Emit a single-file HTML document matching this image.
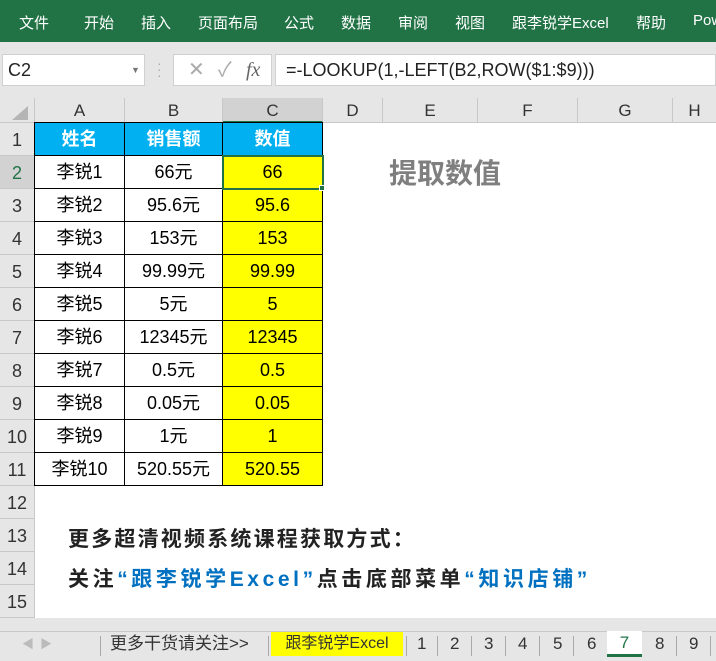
<!DOCTYPE html><html><head><meta charset="utf-8"><style>
*{margin:0;padding:0;box-sizing:border-box}
body{width:716px;height:661px;overflow:hidden;background:#fff;font-family:"Liberation Sans","Noto Sans CJK SC",sans-serif;position:relative}
.a{position:absolute;white-space:nowrap}
.rib{left:0;top:0;width:716px;height:42px;background:#217346;color:#fff;font-size:15px}
.rib span{position:absolute;top:12px}
.fb{left:0;top:42px;width:716px;height:56px;background:#e6e6e6}
.ch{top:98px;height:25px;background:#e6e6e6;border-right:1px solid #c8c8c8;border-bottom:1px solid #c8c8c8;text-align:center;font-size:17px;line-height:25px;color:#333}
.rh{left:0;width:35px;height:33px;background:#e6e6e6;border-bottom:1px solid #c8c8c8;border-right:1px solid #c8c8c8;text-align:center;font-size:18px;line-height:34px;color:#333}
.g{display:grid;grid-template-columns:90px 98px 100px;grid-auto-rows:33px;border-left:1px solid #000;border-top:1px solid #000}
.g div{border-right:1px solid #000;border-bottom:1px solid #000;text-align:center;font-size:18px;line-height:32px;color:#000;white-space:nowrap}
.g .h{background:#00b0f0;color:#fff;font-weight:bold}
.g .y{background:#ff0}
.sep{position:absolute;top:4px;height:20px;border-left:1px solid #aaa}
</style></head><body>
<div class="a rib">
<span style="left:19px">文件</span><span style="left:84px">开始</span><span style="left:141px">插入</span><span style="left:198px">页面布局</span><span style="left:284px">公式</span><span style="left:341px">数据</span><span style="left:398px">审阅</span><span style="left:455px">视图</span><span style="left:512px">跟李锐学Excel</span><span style="left:636px">帮助</span><span style="left:693px">Pow</span>
</div>
<div class="a fb"></div>
<div class="a" style="left:2px;top:54px;width:143px;height:32px;background:#fff;border:1px solid #d0d0d0;font-size:18px;line-height:30px;padding-left:5px;color:#222">C2<span class="a" style="left:128px;top:0;font-size:9px;color:#777">▼</span></div>
<div class="a" style="left:157px;top:60px;color:#aaa;font-size:14px;line-height:6px">·<br>·<br>·</div>
<div class="a" style="left:173px;top:54px;width:99px;height:32px;background:#fff;border:1px solid #d0d0d0;color:#aaa;font-size:20px;line-height:30px"><span class="a" style="left:14px">✕</span><span class="a" style="left:44px">✓</span><span class="a" style="left:72px;font-family:'Liberation Serif',serif;font-style:italic;color:#666">fx</span></div>
<div class="a" style="left:275px;top:54px;width:441px;height:32px;background:#fff;border:1px solid #d0d0d0;font-size:18px;line-height:30px;padding-left:10px;color:#222">=-LOOKUP(1,-LEFT(B2,ROW($1:$9)))</div>
<div class="a ch" style="left:0;width:35px;background:#e6e6e6"><div class="a" style="left:12px;top:8px;width:0;height:0;border-left:16px solid transparent;border-bottom:14px solid #b5b5b5"></div></div>
<div class="a ch" style="left:35px;width:90px">A</div>
<div class="a ch" style="left:125px;width:98px">B</div>
<div class="a ch" style="left:223px;width:100px;background:#d2d2d2;border-bottom:2px solid #217346">C</div>
<div class="a ch" style="left:323px;width:60px">D</div>
<div class="a ch" style="left:383px;width:95px">E</div>
<div class="a ch" style="left:478px;width:100px">F</div>
<div class="a ch" style="left:578px;width:95px">G</div>
<div class="a ch" style="left:673px;width:43px;border-right:none">H</div>
<div class="a rh" style="top:123px">1</div><div class="a rh" style="top:156px;background:#d2d2d2;color:#217346">2</div><div class="a rh" style="top:189px">3</div><div class="a rh" style="top:222px">4</div><div class="a rh" style="top:255px">5</div><div class="a rh" style="top:288px">6</div><div class="a rh" style="top:321px">7</div><div class="a rh" style="top:354px">8</div><div class="a rh" style="top:387px">9</div><div class="a rh" style="top:420px">10</div><div class="a rh" style="top:453px">11</div><div class="a rh" style="top:486px">12</div><div class="a rh" style="top:519px">13</div><div class="a rh" style="top:552px">14</div><div class="a rh" style="top:585px">15</div>
<div class="a" style="left:0;top:618px;width:716px;height:13px;background:#e6e6e6"></div>
<div class="a g" style="left:34px;top:122px">
<div class="h">姓名</div><div class="h">销售额</div><div class="h">数值</div>
<div>李锐1</div><div>66元</div><div class="y">66</div>
<div>李锐2</div><div>95.6元</div><div class="y">95.6</div>
<div>李锐3</div><div>153元</div><div class="y">153</div>
<div>李锐4</div><div>99.99元</div><div class="y">99.99</div>
<div>李锐5</div><div>5元</div><div class="y">5</div>
<div>李锐6</div><div>12345元</div><div class="y">12345</div>
<div>李锐7</div><div>0.5元</div><div class="y">0.5</div>
<div>李锐8</div><div>0.05元</div><div class="y">0.05</div>
<div>李锐9</div><div>1元</div><div class="y">1</div>
<div>李锐10</div><div>520.55元</div><div class="y">520.55</div>
</div>
<div class="a" style="left:222px;top:155px;width:102px;height:35px;border:2px solid #217346"></div>
<div class="a" style="left:319px;top:185px;width:6px;height:6px;background:#217346;border:1px solid #fff"></div>
<div class="a" style="left:389px;top:156px;font-size:28px;font-weight:bold;color:#7f7f7f;line-height:36px">提取数值</div>
<div class="a" style="left:68px;top:523px;font-size:21px;font-weight:bold;color:#222;letter-spacing:2.2px">更多超清视频系统课程获取方式：</div>
<div class="a" style="left:68px;top:563px;font-size:21px;font-weight:bold;color:#222;letter-spacing:3.6px">关注<span style="color:#0070c0">“跟李锐学Excel”</span>点击底部菜单<span style="color:#0070c0">“知识店铺”</span></div>
<div class="a" style="left:0;top:631px;width:716px;height:30px;background:#e6e6e6;border-top:1px solid #c8c8c8;font-size:17px;color:#333;line-height:24px">
<span class="a" style="left:22px;color:#bbb;font-size:12px">◀</span><span class="a" style="left:40px;color:#bbb;font-size:12px">▶</span>
<span class="sep" style="left:100px"></span>
<span class="a" style="left:110px">更多干货请关注&gt;&gt;</span>
<span class="sep" style="left:268px"></span>
<span class="a" style="left:271px;top:0;width:132px;height:24px;background:#ff0;text-align:center;font-size:16px">跟李锐学Excel</span>
<span class="sep" style="left:406px"></span>
<span class="a" style="left:417px">1</span><span class="sep" style="left:437px"></span><span class="a" style="left:450px">2</span><span class="sep" style="left:471px"></span><span class="a" style="left:484px">3</span><span class="sep" style="left:505px"></span><span class="a" style="left:518px">4</span><span class="sep" style="left:539px"></span><span class="a" style="left:553px">5</span><span class="sep" style="left:573px"></span><span class="a" style="left:587px">6</span>
<span class="a" style="left:607px;top:-1px;width:35px;height:26px;background:#fff;border-bottom:3px solid #217346;text-align:center;color:#217346">7</span>
<span class="a" style="left:655px">8</span><span class="sep" style="left:676px"></span><span class="a" style="left:689px">9</span><span class="sep" style="left:710px"></span>
</div>
</body></html>
